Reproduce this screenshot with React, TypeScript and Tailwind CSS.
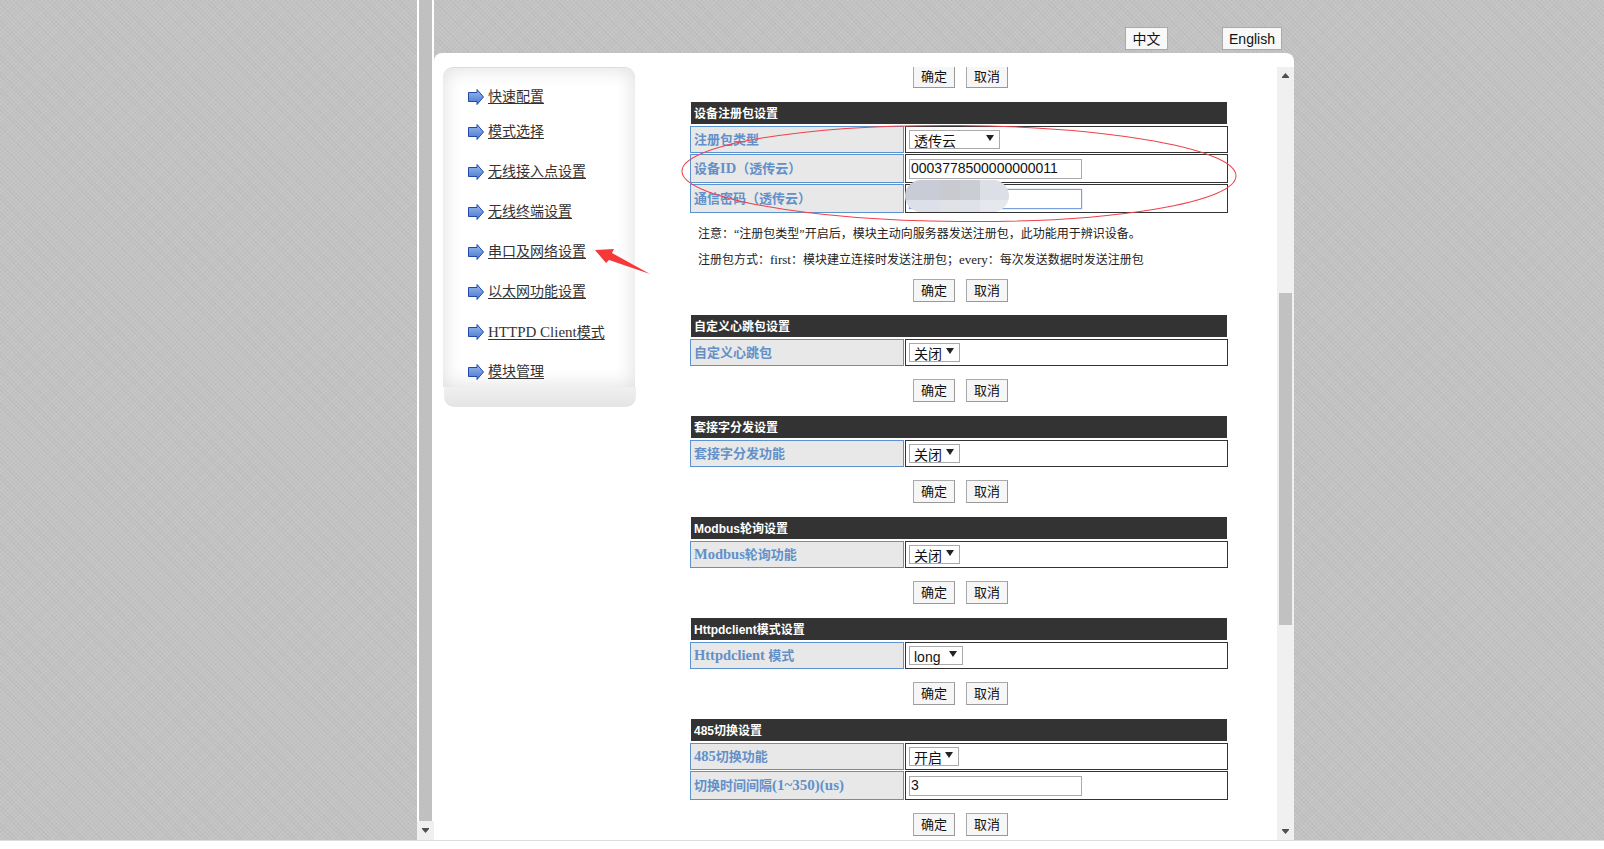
import React from "react";

const CJK = "font-['Liberation_Serif','Noto_Sans_CJK_SC',serif]";
const SANS = "font-['Liberation_Sans','Noto_Sans_CJK_SC',sans-serif]";

function ArrowIcon() {
  return (
    <svg width="16" height="16" viewBox="0 0 16 16" className="shrink-0">
      <defs>
        <linearGradient id="ar" x1="0" y1="0" x2="0" y2="1">
          <stop offset="0" stopColor="#98b8ee" />
          <stop offset="1" stopColor="#4b78cf" />
        </linearGradient>
      </defs>
      <path d="M0.5 3.5H9V0.5L15.5 8L9 15.5V12.5H0.5Z" fill="url(#ar)" stroke="#1f4aa8" strokeWidth="1" />
    </svg>
  );
}

function MenuItem({ label, mt }: { label: React.ReactNode; mt: string }) {
  return (
    <div className={`flex items-center h-5 gap-1 ${mt}`}>
      <ArrowIcon />
      <a className={`${CJK} text-[14px] leading-5 text-[#333] underline underline-offset-2`}>{label}</a>
    </div>
  );
}

function Btn({ label }: { label: string }) {
  return (
    <div className={`${SANS} w-[42px] h-[23px] flex items-center justify-center text-[13px] text-[#111] bg-[#f6f6f6] border border-[#aaa] border-b-[#999] border-r-[#999]`}>
      {label}
    </div>
  );
}

function Buttons({ className }: { className: string }) {
  return (
    <div className={`flex gap-[11px] pl-[223px] ${className}`}>
      <Btn label="确定" />
      <Btn label="取消" />
    </div>
  );
}

function Header({ label }: { label: string }) {
  return (
    <div className={`${SANS} mx-px h-[22px] bg-[#333] pl-[3px] pt-px flex items-center text-[12px] font-bold text-white`}>
      {label}
    </div>
  );
}

function L({ children, big }: { children: React.ReactNode; big?: boolean }) {
  return <span className={big ? "text-[15px]" : "text-[14.5px]"}>{children}</span>;
}

function Row({ label, h, children }: { label: React.ReactNode; h: string; children: React.ReactNode }) {
  return (
    <div className={`flex gap-px ${h}`}>
      <div className={`${CJK} w-[214px] shrink-0 border border-[#5b93d1] bg-[#e8e8e8] pl-[3px] flex items-center text-[13px] font-bold text-[#6390c9]`}>
        <span>{label}</span>
      </div>
      <div className="flex-1 border border-[#333] pl-[3px] flex items-center bg-white">{children}</div>
    </div>
  );
}

function Sel({ label, w }: { label: string; w: string }) {
  return (
    <div className={`${SANS} ${w} h-[19px] border border-[#aaa] bg-white flex items-center justify-between pl-1 pr-1 text-[14px] text-[#111]`}>
      <span className="leading-none pt-[2px]">{label}</span>
      <svg width="8" height="6" viewBox="0 0 8 6" className="shrink-0 mr-px mb-[3px]">
        <path d="M0 0H8L4 6Z" fill="#222" />
      </svg>
    </div>
  );
}

function Input({ value, focus }: { value?: string; focus?: boolean }) {
  return (
    <div className={`${SANS} w-[173px] h-5 border pl-px flex items-center text-[14px] text-[#111] bg-white ${focus ? "border-[#7ba0e0] shadow-[0_0_1px_#7ba0e0]" : "border-[#aaa]"}`}>
      {value}
    </div>
  );
}

function Section({ title, label, sel, w }: { title: string; label: React.ReactNode; sel: string; w: string }) {
  return (
    <div>
      <Header label={title} />
      <div className="mt-[2px]">
        <Row label={label} h="h-[27px]">
          <Sel label={sel} w={w} />
        </Row>
      </div>
      <Buttons className="mt-[13px] mb-[14px]" />
    </div>
  );
}

function Tri({ up }: { up?: boolean }) {
  return (
    <svg width="7" height="5" viewBox="0 0 7 5">
      <path d={up ? "M3.5 0L7 4V5H0V4Z" : "M0 0H7V1L3.5 5L0 1Z"} fill="#505050" />
    </svg>
  );
}

export default function App() {
  return (
    <div className="relative w-full h-[849px] bg-white overflow-hidden">
      <div className="h-[840px] border-b border-[#ddd] box-content bg-[#c3c3c3] bg-[repeating-linear-gradient(45deg,rgba(0,0,0,0.035)_0_1px,transparent_1px_3px),repeating-linear-gradient(-45deg,rgba(255,255,255,0.06)_0_1px,transparent_1px_3px)]">
        <div className="flex h-[840px] pl-[417px]">
          {/* outer scrollbar */}
          <div className="w-[17px] bg-white flex flex-col shrink-0">
            <div className="h-[821px] mx-[2px] bg-[#c0c0c0]" />
            <div className="flex-1 bg-[#f0f0f0] flex items-center justify-center">
              <Tri />
            </div>
          </div>

          {/* page column */}
          <div className="w-[860px] shrink-0 flex flex-col">
            <div className="h-[53px] pt-[27px] flex shrink-0">
              <div className={`${SANS} ml-[691px] w-[43px] h-[23px] pt-px bg-[#f8f8f8] border border-[#aaa] flex items-center justify-center text-[14px] text-[#111]`}>中文</div>
              <div className={`${SANS} ml-[54px] w-[60px] h-[23px] pt-px bg-[#f8f8f8] border border-[#aaa] flex items-center justify-center text-[14px] text-[#111]`}>English</div>
            </div>

            <div className="flex-1 min-h-0 bg-white rounded-t-[8px] pt-[14px] flex">
              {/* sidebar */}
              <div className="ml-[9px] w-[193px] shrink-0 flex flex-col h-[340px]">
                <div className="h-[320px] w-[192px] rounded-t-[10px] bg-white shadow-[inset_0_0_20px_#dcdcdc] border-t border-[#dcdcdc] pt-[19px] pl-[25px]">
                  <MenuItem label="快速配置" mt="mt-0" />
                  <MenuItem label="模式选择" mt="mt-[15px]" />
                  <MenuItem label="无线接入点设置" mt="mt-[20px]" />
                  <MenuItem label="无线终端设置" mt="mt-[20px]" />
                  <MenuItem label="串口及网络设置" mt="mt-[20px]" />
                  <MenuItem label="以太网功能设置" mt="mt-[20px]" />
                  <MenuItem label={<><span className="text-[15px]">HTTPD Client</span>模式</>} mt="mt-[20px]" />
                  <MenuItem label="模块管理" mt="mt-[20px]" />
                </div>
                <div className="h-5 ml-px rounded-b-[10px] bg-gradient-to-b from-[#f0f0f0] to-[#e4e4e4]" />
              </div>

              {/* content pane */}
              <div className="w-[641px] shrink-0 h-[773px] overflow-hidden pl-[54px] pr-[49px]">
                <Buttons className="-mt-[2px] mb-[14px]" />

                <Header label="设备注册包设置" />
                <div className="mt-[2px] flex flex-col gap-px">
                  <Row label="注册包类型" h="h-[27px]">
                    <Sel label="透传云" w="w-[91px]" />
                  </Row>
                  <Row label={<>设备<L>ID</L>（透传云）</>} h="h-[29px]">
                    <Input value="0003778500000000011" />
                  </Row>
                  <Row label="通信密码（透传云）" h="h-[29px]">
                    <Input focus />
                  </Row>
                </div>
                <div className={`${CJK} pt-2 pl-2 text-[12px] leading-[26px] text-[#222]`}>
                  <div>注意：“注册包类型”开启后，模块主动向服务器发送注册包，此功能用于辨识设备。</div>
                  <div>注册包方式：<span className="text-[13px]">first</span>：模块建立连接时发送注册包；<span className="text-[13px]">every</span>：每次发送数据时发送注册包</div>
                </div>
                <Buttons className="mt-[6px] mb-[13px]" />

                <Section title="自定义心跳包设置" label="自定义心跳包" sel="关闭" w="w-[51px]" />
                <Section title="套接字分发设置" label="套接字分发功能" sel="关闭" w="w-[51px]" />
                <Section title="Modbus轮询设置" label={<><L>Modbus</L>轮询功能</>} sel="关闭" w="w-[51px]" />
                <Section title="Httpdclient模式设置" label={<><L>Httpdclient</L> 模式</>} sel="long" w="w-[54px]" />

                <Header label="485切换设置" />
                <div className="mt-[2px] flex flex-col gap-px">
                  <Row label={<><L>485</L>切换功能</>} h="h-[27px]">
                    <Sel label="开启" w="w-[50px]" />
                  </Row>
                  <Row label={<>切换时间间隔<L big>(1~350)(us)</L></>} h="h-[29px]">
                    <Input value="3" />
                  </Row>
                </div>
                <Buttons className="mt-[13px]" />
              </div>

              {/* inner scrollbar */}
              <div className="w-[17px] shrink-0 h-[773px] bg-[#f0f0f0] flex flex-col items-center">
                <div className="h-[17px] flex items-center justify-center shrink-0">
                  <Tri up />
                </div>
                <div className="mt-[209px] w-[13px] h-[332px] bg-[#c1c1c1] shrink-0" />
                <div className="flex-1" />
                <div className="h-[18px] flex items-center justify-center shrink-0">
                  <Tri />
                </div>
              </div>
            </div>
          </div>
        </div>
      </div>

      {/* blurred-out password, painted over the field */}
      <div className="absolute left-[905px] top-[180px] w-[104px] h-[32px] rounded-[16px] overflow-hidden grid grid-cols-[35px_20px_20px_29px] grid-rows-[20px_12px]">
        <div className="bg-[#c8ccd6]" />
        <div className="bg-[#c9cacf]" />
        <div className="bg-[#cbcdd4]" />
        <div className="bg-[#dcdfe6]" />
        <div className="bg-[#dde0e8]" />
        <div className="bg-[#e0e2e8]" />
        <div className="bg-[#dfe2e9]" />
        <div className="bg-[#e6e8ed]" />
      </div>

      {/* hand-drawn annotations */}
      <svg className="absolute left-0 top-0 pointer-events-none" width="1604" height="849" viewBox="0 0 1604 849">
        <ellipse cx="959" cy="173.5" rx="277" ry="48" fill="none" stroke="#f0404a" strokeWidth="1" transform="rotate(0.5 959 173.5)" />
        <path d="M595 250L614 249L612 253L650 274L609 260L606 263Z" fill="#f5393a" />
      </svg>
    </div>
  );
}
